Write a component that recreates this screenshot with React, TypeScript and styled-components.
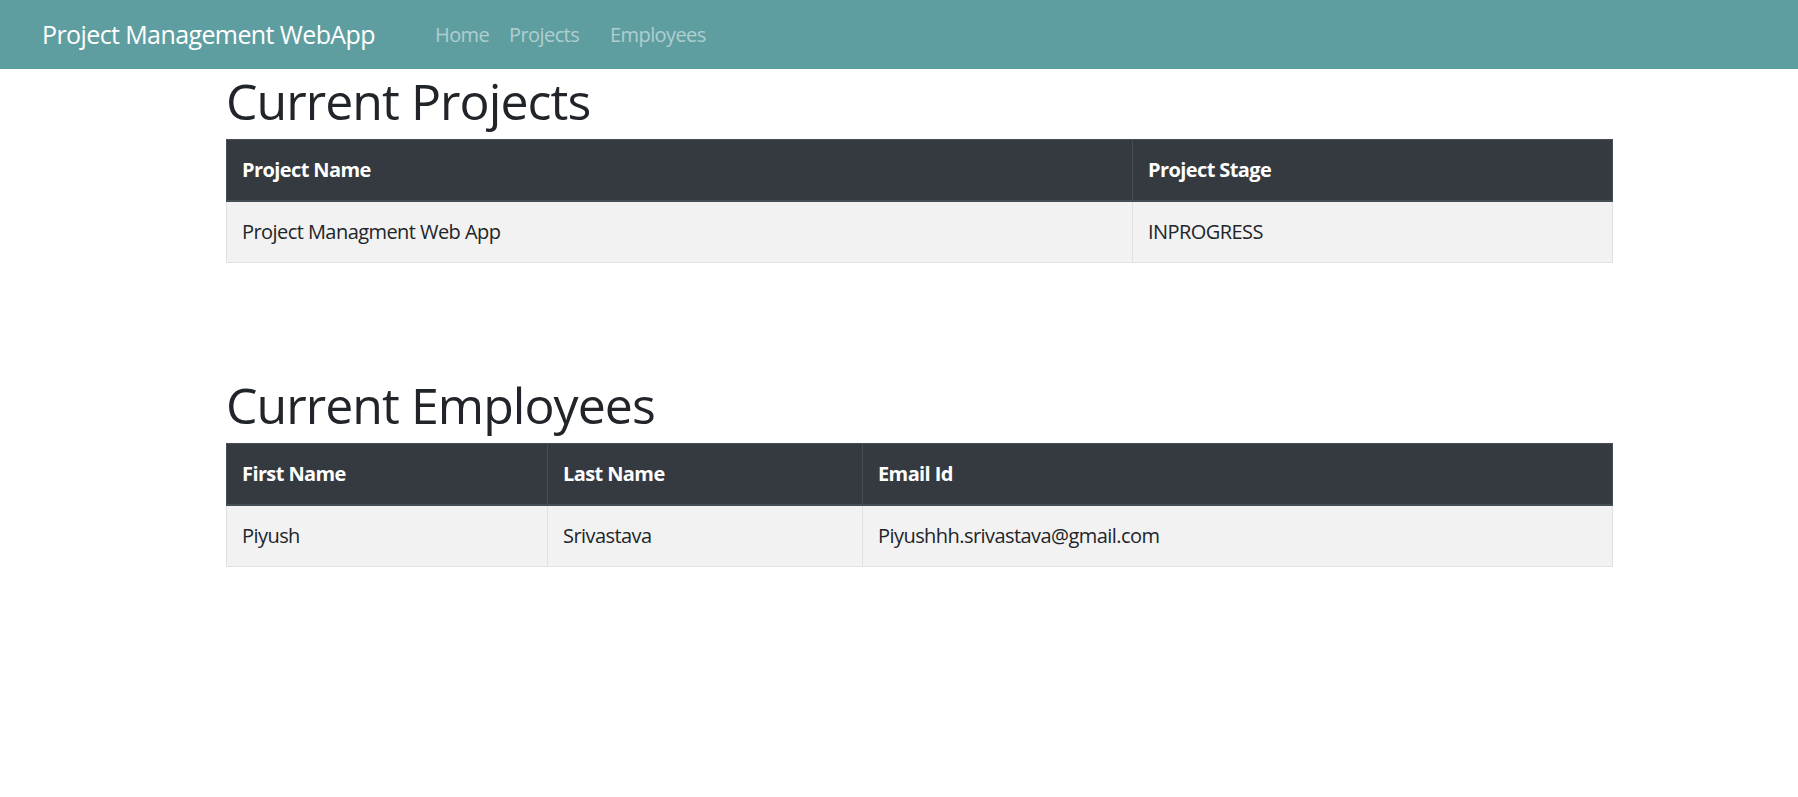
import React from "react";
import styled, { createGlobalStyle } from "styled-components";

const GlobalStyle = createGlobalStyle`
  html, body {
    margin: 0;
    padding: 0;
    background: #ffffff;
  }
  body {
    font-family: "Open Sans", "Noto Sans", "Liberation Sans", sans-serif;
    color: #212529;
    font-size: 20px;
    line-height: 1.5;
  }
  * { box-sizing: border-box; }
`;

const NavBar = styled.nav`
  height: 69px;
  background: #5f9ea0;
  display: flex;
  align-items: center;
  padding-left: 42px;
`;

const Brand = styled.a`
  color: #ffffff;
  font-size: 25px;
  line-height: 1.5;
  letter-spacing: -0.024em;
  text-decoration: none;
  margin-right: 50px;
  white-space: nowrap;
`;

const NavList = styled.div`
  display: flex;
  align-items: center;
`;

const NavLink = styled.a<{ $gap?: number }>`
  color: rgba(255, 255, 255, 0.5);
  font-size: 20px;
  letter-spacing: -0.03em;
  text-decoration: none;
  padding: 10px 10px;
  margin-left: ${(p) => p.$gap ?? 0}px;
`;

const Main = styled.main`
  padding: 0 185px 0 226px;
`;

const Section = styled.section<{ $top?: number }>`
  margin-top: ${(p) => p.$top ?? 0}px;
`;

const Heading = styled.h1`
  margin: 0 0 8px 0;
  padding-top: 2px;
  font-size: 50px;
  font-weight: 500;
  line-height: 1.2;
  letter-spacing: -0.019em;
  color: #212529;
`;

const Table = styled.table`
  width: 100%;
  border-collapse: collapse;
  border: 1px solid #dee2e6;
  margin-bottom: 20px;
`;

const HeadCell = styled.th<{ $w?: number }>`
  background: #343a40;
  color: #ffffff;
  font-weight: 700;
  text-align: left;
  vertical-align: bottom;
  padding: 15px 15px;
  line-height: 30px;
  font-size: 20px;
  letter-spacing: -0.03em;
  border: 1px solid #454d55;
  border-bottom: 2px solid #454d55;
  width: ${(p) => (p.$w ? `${p.$w}px` : "auto")};
`;

const Row = styled.tr`
  background: #f2f2f2;
`;

const Cell = styled.td`
  padding: 15px 15px;
  line-height: 30px;
  font-size: 20px;
  letter-spacing: -0.028em;
  border: 1px solid #dee2e6;
  vertical-align: top;
  color: #212529;
`;

export default function App() {
  return (
    <>
      <GlobalStyle />
      <NavBar>
        <Brand href="#">Project Management WebApp</Brand>
        <NavList>
          <NavLink href="#">Home</NavLink>
          <NavLink href="#">Projects</NavLink>
          <NavLink href="#" $gap={11}>Employees</NavLink>
        </NavList>
      </NavBar>
      <Main>
        <Section>
          <Heading>Current Projects</Heading>
          <Table>
            <thead>
              <tr>
                <HeadCell $w={906}>Project Name</HeadCell>
                <HeadCell>Project Stage</HeadCell>
              </tr>
            </thead>
            <tbody>
              <Row>
                <Cell>Project Managment Web App</Cell>
                <Cell>INPROGRESS</Cell>
              </Row>
            </tbody>
          </Table>
        </Section>
        <Section $top={110}>
          <Heading>Current Employees</Heading>
          <Table>
            <thead>
              <tr>
                <HeadCell $w={321}>First Name</HeadCell>
                <HeadCell $w={315}>Last Name</HeadCell>
                <HeadCell>Email Id</HeadCell>
              </tr>
            </thead>
            <tbody>
              <Row>
                <Cell>Piyush</Cell>
                <Cell>Srivastava</Cell>
                <Cell>Piyushhh.srivastava@gmail.com</Cell>
              </Row>
            </tbody>
          </Table>
        </Section>
      </Main>
    </>
  );
}
